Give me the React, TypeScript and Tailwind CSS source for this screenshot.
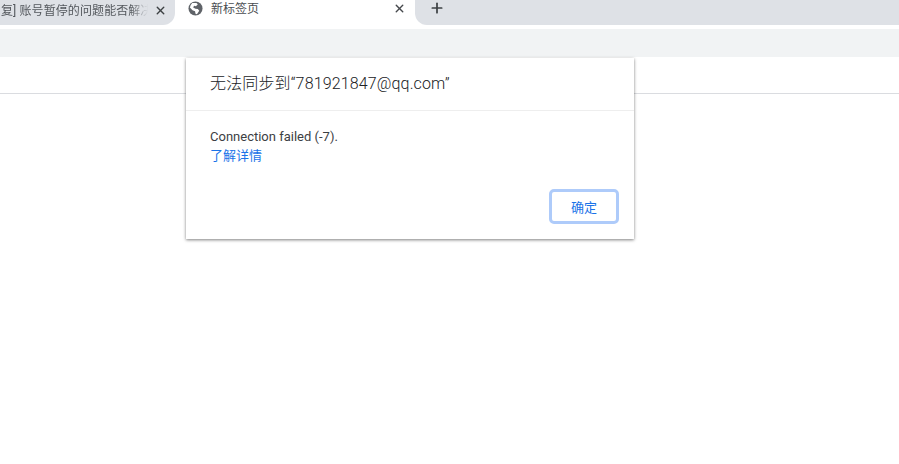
import { Plus, X } from "lucide-react";

const font = { fontFamily: '"Roboto", "Noto Sans CJK SC", sans-serif' };

function Globe() {
    return (
        <svg viewBox="0 0 16 16" className="h-[15px] w-[15px]">
            <circle cx="8" cy="8" r="7.5" fill="#5f6368" />
            <path d="M4.5 2.2 L9 2 L10.5 3.5 L8.5 5.5 L6.5 5 L5.5 7 L8 8.2 L10.5 8.5 L12 10.5 L9.5 14 L8 13.6 L7.5 10.8 L4.8 9.8 L2 7 Q2.6 3.8 4.5 2.2 Z" fill="#fff" />
        </svg>
    );
}

export default function App() {
    return (
        <div className="relative h-[464px] w-[899px] overflow-hidden bg-white" style={font}>
            {/* Tab strip */}
            <div className="flex h-[29px] items-start">
                <div className="flex h-[25px] w-[175px] shrink-0 items-center rounded-br-xl bg-[#dee1e6] pr-[8px] pb-[4px] pl-[1px]">
                    <span className="w-[147px] overflow-hidden text-[12px] tracking-[0.1px] whitespace-nowrap text-[#53575c] [mask-image:linear-gradient(to_right,black_88%,transparent)]">
                        复] 账号暂停的问题能否解决
                    </span>
                    <X className="ml-auto h-[13px] w-[13px] text-[#3c4043]" strokeWidth={2.6} />
                </div>
                <div className="flex h-[25px] w-[240px] shrink-0 items-center pr-[9px] pb-[8px] pl-[13px]">
                    <Globe />
                    <span className="ml-[8px] flex-1 text-[12px] text-[#4a4d51]">新标签页</span>
                    <X className="h-[13px] w-[13px] text-[#45484c]" strokeWidth={2.6} />
                </div>
                <div className="flex h-[25px] flex-1 items-center rounded-bl-xl bg-[#dee1e6] pb-[9px] pl-[14px]">
                    <Plus className="h-[16px] w-[16px] text-[#3c4043]" strokeWidth={2.6} />
                </div>
            </div>

            {/* Toolbar */}
            <div className="h-[28px] bg-[#f1f3f4]" />

            {/* Bookmarks bar */}
            <div className="h-[37px] border-b border-[#dadce0]" />

            {/* Sync error dialog */}
            <div className="absolute top-[58px] left-[186px] flex h-[181px] w-[448px] flex-col bg-white shadow-[0_1px_3px_rgba(0,0,0,0.5)]">
                <div className="flex h-[53px] items-center border-b border-[#eeeeee] pl-[24px] text-[16px] font-light tracking-[0.14px] text-[#202124]">
                    无法同步到“781921847@qq.com”
                </div>
                <div className="px-[24px] pt-[18px]">
                    <p className="text-[13px] leading-[16px] text-[#3c4043]">Connection failed (-7).</p>
                    <a href="#" className="mt-[2px] block text-[13px] leading-[18px] text-[#1a73e8]">了解详情</a>
                </div>
                <div className="mt-auto flex justify-end pr-[15px] pb-[15px]">
                    <button className="h-[35px] w-[70px] rounded-[5px] border-[3px] border-[#aecbfa] bg-white pt-[2px] text-[13px] text-[#1a73e8]">
                        确定
                    </button>
                </div>
            </div>
        </div>
    );
}
